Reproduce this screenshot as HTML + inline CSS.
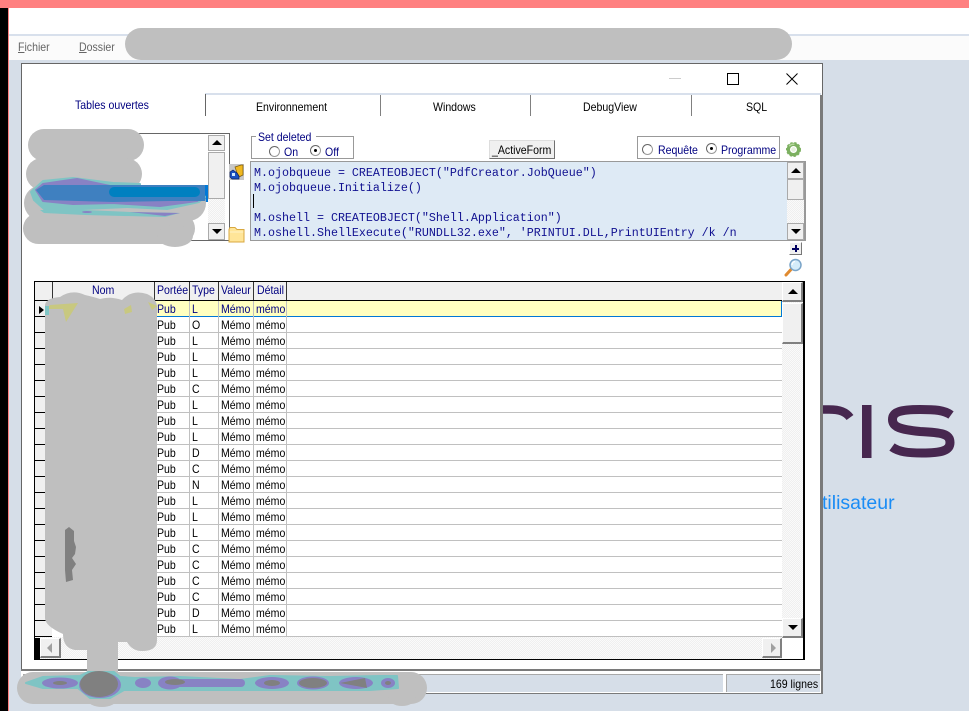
<!DOCTYPE html>
<html><head><meta charset="utf-8">
<style>
html,body{margin:0;padding:0}
body{width:969px;height:711px;overflow:hidden;position:relative;background:#d6dee8;font-family:"Liberation Sans",sans-serif;font-size:12px;color:#000}
div,span,i,u{position:absolute;white-space:nowrap}
i{font-style:normal}
u.n{position:static}
.navy{color:#000080}
.t,.g i,.h{transform:translateY(1px) scaleX(.88);transform-origin:0 50%}
.btn{background:#f0f0f0;box-sizing:border-box;border:1px solid;border-color:#fff #808080 #808080 #fff}
.dither{background-color:#fafafa;background-image:linear-gradient(45deg,#efefef 25%,transparent 25%,transparent 75%,#efefef 75%),linear-gradient(45deg,#efefef 25%,transparent 25%,transparent 75%,#efefef 75%);background-size:2px 2px;background-position:0 0,1px 1px}
.ind{left:35px;width:17px;height:16px;box-sizing:border-box;background:#f0f0f0;border-bottom:1px solid #000}
.h{top:282px;height:14px;line-height:14px;color:#000080}
.vh{top:282px;width:1px;height:18px;background:#333}
.code{left:254px;font-family:"Liberation Mono",monospace;font-size:11.67px;line-height:15px;color:#101090}
.up{width:0;height:0;border-left:5px solid transparent;border-right:5px solid transparent;border-bottom:5px solid #000}
.dn{width:0;height:0;border-left:5px solid transparent;border-right:5px solid transparent;border-top:5px solid #000}
.radio{width:9px;height:9px;border-radius:50%;background:#fff;border:1px solid #999;border-top-color:#666;border-left-color:#666}
.dot{width:3px;height:3px;border-radius:50%;background:#000;left:3px;top:3px}
.g{left:155px;width:627px;height:16px;box-sizing:border-box;border-bottom:1px solid #c0c0c0}
.g i{top:0;line-height:14px}.g i:nth-child(1){left:2px}.g i:nth-child(2){left:37px}.g i:nth-child(3){left:66px}.g i:nth-child(4){left:101px}
.g b{position:absolute;top:0;width:1px;height:16px;background:#c0c0c0}.g b.x{left:34px}.g b.y{left:63px}.g b.z{left:98px}.g b.w{left:131px}
</style></head>
<body>
<!-- top chrome -->
<div style="left:0;top:0;width:969px;height:8px;background:#ff8080"></div>
<div style="left:0;top:8px;width:8px;height:703px;background:#000"></div>
<div style="left:8px;top:8px;width:1px;height:703px;background:#ff8080"></div>
<div style="left:9px;top:8px;width:960px;height:26px;background:#fff"></div>
<div style="left:9px;top:34px;width:960px;height:2px;background:#d8e0ec"></div>
<div style="left:9px;top:36px;width:960px;height:24px;background:#fbfbfb"></div>
<div class="t" style="left:18px;top:39px;color:#666;line-height:14px"><u class="n">F</u>ichier</div>
<div class="t" style="left:79px;top:39px;color:#666;line-height:14px"><u class="n">D</u>ossier</div>

<!-- background logo -->
<svg style="position:absolute;left:815px;top:395px" width="154" height="70" viewBox="815 395 154 70">
<path d="M822 409.500H829C840 409.500 846 412 850 417.500" fill="none" stroke="#47274f" stroke-width="8.500"/>
<rect x="862" y="405" width="9.500" height="53" fill="#47274f"/>
<path d="M951 415C944 410 935 409.500 920 409.500C900 409.500 892.500 412 892.500 419.500C892.500 427 900 429.500 920 431.500C942 432.500 950 434 950 442.500C950 450.500 942 453 922 453C908 453 899 452 892 447" fill="none" stroke="#47274f" stroke-width="9"/>
</svg>
<div style="left:822px;top:492px;font-size:19.500px;line-height:22px;color:#1a8cf5">tilisateur</div>

<!-- window -->
<div style="left:21px;top:63px;width:802px;height:608px;background:#fff;box-sizing:border-box;border:1px solid #666"></div>
<div style="left:820px;top:95px;width:3px;height:575px;background:#7a7a7a"></div>
<div style="left:21px;top:669px;width:802px;height:2px;background:#7a7a7a"></div>
<!-- title buttons -->
<div style="left:669px;top:78px;width:12px;height:1px;background:#ccc"></div>
<div style="left:727px;top:73px;width:12px;height:12px;box-sizing:border-box;border:1px solid #000"></div>
<svg style="position:absolute;left:785px;top:72px" width="14" height="14"><path d="M1.500 1.500L12.500 12.500M12.500 1.500L1.500 12.500" stroke="#000" stroke-width="1"/></svg>

<!-- tabs -->
<div style="left:205px;top:93px;width:616px;height:2px;background:#d8e0ec"></div>
<div style="left:205px;top:94px;width:1px;height:22px;background:#666"></div>
<div style="left:380px;top:95px;width:1px;height:21px;background:#808080"></div>
<div style="left:530px;top:95px;width:1px;height:21px;background:#808080"></div>
<div style="left:691px;top:95px;width:1px;height:21px;background:#808080"></div>
<div class="t navy" style="left:75px;top:97px;line-height:14px">Tables ouvertes</div>
<div class="t" style="left:256px;top:99px;line-height:14px">Environnement</div>
<div class="t" style="left:433px;top:99px;line-height:14px">Windows</div>
<div class="t" style="left:583px;top:99px;line-height:14px">DebugView</div>
<div class="t" style="left:746px;top:99px;line-height:14px">SQL</div>

<!-- list box -->
<div style="left:120px;top:133px;width:110px;height:108px;box-sizing:border-box;border:1px solid #666;background:#fff"></div>
<div style="left:34px;top:185px;width:174px;height:17px;background:#0078d7"></div>
<div class="dither" style="left:208px;top:152px;width:17px;height:87px"></div>
<div class="btn" style="left:208px;top:135px;width:17px;height:16px;border:1px solid #aaa"><div class="up" style="left:3px;top:4px"></div></div>
<div class="btn" style="left:208px;top:152px;width:17px;height:47px;border:1px solid #aaa"></div>
<div class="btn" style="left:208px;top:223px;width:17px;height:17px;border:1px solid #aaa"><div class="dn" style="left:3px;top:5px"></div></div>

<!-- icons -->
<svg style="position:absolute;left:229px;top:164px" width="15" height="16" viewBox="0 0 15 16">
<rect width="15" height="16" fill="#c8c8c8"/>
<path d="M6 3L12 1H14V11L10 13L8 9Z" fill="#f0b820" stroke="#7a5a10" stroke-width=".7"/>
<path d="M1 8L4 6L8 9L10 12V15H3L1 13Z" fill="#1a50c0" stroke="#0a2060" stroke-width=".7"/>
<rect x="3" y="9" width="3" height="3" fill="#cfe8ff"/>
</svg>
<svg style="position:absolute;left:228px;top:226px" width="17" height="17" viewBox="0 0 17 17">
<path d="M1 16V3.500L2 1.500H7L9 3.500H16V16Z" fill="#ffe598" stroke="#d8a840" stroke-width="1"/>
<path d="M1.500 6H15.500" stroke="#fff2c8" stroke-width="1"/>
</svg>

<!-- set deleted -->
<div style="left:251px;top:136px;width:103px;height:23px;box-sizing:border-box;border:1px solid #999"></div>
<div style="left:256px;top:131px;width:60px;height:12px;background:#fff"></div>
<div class="t navy" style="left:258px;top:129px;line-height:14px">Set deleted</div>
<div class="radio" style="left:269px;top:146px"></div>
<div class="t navy" style="left:284px;top:144px;line-height:14px">On</div>
<div class="radio" style="left:310px;top:145px"><div class="dot"></div></div>
<div class="t navy" style="left:325px;top:144px;line-height:14px">Off</div>

<!-- active form -->
<div style="left:489px;top:140px;width:66px;height:19px;box-sizing:border-box;background:#f0f0f0;border:1px solid;border-color:#ddd #707070 #707070 #ddd"></div>
<div class="t" style="left:492px;top:142px;line-height:15px">_ActiveForm</div>

<!-- requete group -->
<div style="left:637px;top:136px;width:143px;height:23px;box-sizing:border-box;border:1px solid #999"></div>
<div class="radio" style="left:642px;top:144px"></div>
<div class="t navy" style="left:658px;top:142px;line-height:14px">Requête</div>
<div class="radio" style="left:706px;top:143px"><div class="dot"></div></div>
<div class="t navy" style="left:721px;top:142px;line-height:14px">Programme</div>
<svg style="position:absolute;left:786px;top:142px" width="15" height="15" viewBox="0 0 16 16">
<circle cx="8" cy="8" r="5.500" fill="none" stroke="#7cb060" stroke-width="3.500"/>
<circle cx="8" cy="8" r="7" fill="none" stroke="#7cb060" stroke-width="2" stroke-dasharray="2.400 1.800"/>
<circle cx="8" cy="8" r="2.500" fill="#e6f2dc"/>
<path d="M3.500 4.500A5.500 5.500 0 0 1 9 2.500" stroke="#b8d8a0" stroke-width="1.500" fill="none"/>
</svg>

<!-- code box -->
<div style="left:250px;top:161px;width:556px;height:80px;box-sizing:border-box;border:1px solid #999;border-right:2px solid #999;background:#deeaf5"></div>
<div class="code" style="top:166px">M.ojobqueue = CREATEOBJECT("PdfCreator.JobQueue")</div>
<div class="code" style="top:181px">M.ojobqueue.Initialize()</div>
<div style="left:253px;top:194px;width:1px;height:14px;background:#000"></div>
<div class="code" style="top:211px">M.oshell = CREATEOBJECT("Shell.Application")</div>
<div class="code" style="top:226px">M.oshell.ShellExecute("RUNDLL32.exe", 'PRINTUI.DLL,PrintUIEntry /k /n</div>
<div class="dither" style="left:787px;top:162px;width:17px;height:78px"></div>
<div class="btn" style="left:787px;top:162px;width:17px;height:17px;border:1px solid #aaa"><div class="up" style="left:3px;top:5px"></div></div>
<div class="btn" style="left:787px;top:179px;width:17px;height:21px;border:1px solid #aaa"></div>
<div class="btn" style="left:787px;top:223px;width:17px;height:17px;border:1px solid #aaa"><div class="dn" style="left:3px;top:5px"></div></div>

<!-- plus / magnifier -->
<div class="btn" style="left:789px;top:242px;width:13px;height:13px;border-color:#fff #777 #777 #fff"></div>
<div style="left:792px;top:248px;width:7px;height:2px;background:#000060"></div>
<div style="left:795px;top:245px;width:2px;height:7px;background:#000060"></div>
<svg style="position:absolute;left:784px;top:258px" width="19" height="19" viewBox="0 0 19 19">
<path d="M2 17L7 11.500" stroke="#e08a30" stroke-width="3" stroke-linecap="round"/>
<circle cx="11.500" cy="7" r="5.500" fill="#d4ecfa" stroke="#7aa4c8" stroke-width="1.500"/>
<path d="M8 7A3.500 3.500 0 0 1 11 3.500" stroke="#fff" stroke-width="1.300" fill="none"/>
</svg>

<!-- grid -->
<div style="left:34px;top:281px;width:771px;height:379px;box-sizing:border-box;border:1px solid #000;border-width:1px 2px 2px 1px;background:#fff"></div>
<div style="left:35px;top:282px;width:747px;height:18px;background:#f0f0f0"></div>
<div style="left:35px;top:300px;width:747px;height:1px;background:#000"></div>
<div class="vh" style="left:52px"></div><div class="vh" style="left:154px"></div><div class="vh" style="left:189px"></div><div class="vh" style="left:218px"></div><div class="vh" style="left:253px"></div><div class="vh" style="left:286px"></div>
<div class="h" style="left:92px">Nom</div><div class="h" style="left:157px">Portée</div><div class="h" style="left:192px">Type</div><div class="h" style="left:221px">Valeur</div><div class="h" style="left:257px">Détail</div>

<div style="left:155px;top:301px;width:627px;height:16px;box-sizing:border-box;background:#ffffc0;border-right:1px solid #0078d7;border-bottom:1px solid #0078d7"></div>
<div class="ind" style="top:301px"></div><div class="ind" style="top:317px"></div><div class="ind" style="top:333px"></div><div class="ind" style="top:349px"></div><div class="ind" style="top:365px"></div><div class="ind" style="top:381px"></div><div class="ind" style="top:397px"></div><div class="ind" style="top:413px"></div><div class="ind" style="top:429px"></div><div class="ind" style="top:445px"></div><div class="ind" style="top:461px"></div><div class="ind" style="top:477px"></div><div class="ind" style="top:493px"></div><div class="ind" style="top:509px"></div><div class="ind" style="top:525px"></div><div class="ind" style="top:541px"></div><div class="ind" style="top:557px"></div><div class="ind" style="top:573px"></div><div class="ind" style="top:589px"></div><div class="ind" style="top:605px"></div><div class="ind" style="top:621px"></div>
<div style="left:39px;top:306px;width:0;height:0;border-top:4px solid transparent;border-bottom:4px solid transparent;border-left:5px solid #000"></div>

<div class="g navy" style="top:301px;border-bottom-color:#0078d7"><i>Pub</i><i>L</i><i>Mémo</i><i>mémo</i><b class="x"></b><b class="y"></b><b class="z"></b><b class="w"></b></div>
<div class="g" style="top:317px"><i>Pub</i><i>O</i><i>Mémo</i><i>mémo</i><b class="x"></b><b class="y"></b><b class="z"></b><b class="w"></b></div>
<div class="g" style="top:333px"><i>Pub</i><i>L</i><i>Mémo</i><i>mémo</i><b class="x"></b><b class="y"></b><b class="z"></b><b class="w"></b></div>
<div class="g" style="top:349px"><i>Pub</i><i>L</i><i>Mémo</i><i>mémo</i><b class="x"></b><b class="y"></b><b class="z"></b><b class="w"></b></div>
<div class="g" style="top:365px"><i>Pub</i><i>L</i><i>Mémo</i><i>mémo</i><b class="x"></b><b class="y"></b><b class="z"></b><b class="w"></b></div>
<div class="g" style="top:381px"><i>Pub</i><i>C</i><i>Mémo</i><i>mémo</i><b class="x"></b><b class="y"></b><b class="z"></b><b class="w"></b></div>
<div class="g" style="top:397px"><i>Pub</i><i>L</i><i>Mémo</i><i>mémo</i><b class="x"></b><b class="y"></b><b class="z"></b><b class="w"></b></div>
<div class="g" style="top:413px"><i>Pub</i><i>L</i><i>Mémo</i><i>mémo</i><b class="x"></b><b class="y"></b><b class="z"></b><b class="w"></b></div>
<div class="g" style="top:429px"><i>Pub</i><i>L</i><i>Mémo</i><i>mémo</i><b class="x"></b><b class="y"></b><b class="z"></b><b class="w"></b></div>
<div class="g" style="top:445px"><i>Pub</i><i>D</i><i>Mémo</i><i>mémo</i><b class="x"></b><b class="y"></b><b class="z"></b><b class="w"></b></div>
<div class="g" style="top:461px"><i>Pub</i><i>C</i><i>Mémo</i><i>mémo</i><b class="x"></b><b class="y"></b><b class="z"></b><b class="w"></b></div>
<div class="g" style="top:477px"><i>Pub</i><i>N</i><i>Mémo</i><i>mémo</i><b class="x"></b><b class="y"></b><b class="z"></b><b class="w"></b></div>
<div class="g" style="top:493px"><i>Pub</i><i>L</i><i>Mémo</i><i>mémo</i><b class="x"></b><b class="y"></b><b class="z"></b><b class="w"></b></div>
<div class="g" style="top:509px"><i>Pub</i><i>L</i><i>Mémo</i><i>mémo</i><b class="x"></b><b class="y"></b><b class="z"></b><b class="w"></b></div>
<div class="g" style="top:525px"><i>Pub</i><i>L</i><i>Mémo</i><i>mémo</i><b class="x"></b><b class="y"></b><b class="z"></b><b class="w"></b></div>
<div class="g" style="top:541px"><i>Pub</i><i>C</i><i>Mémo</i><i>mémo</i><b class="x"></b><b class="y"></b><b class="z"></b><b class="w"></b></div>
<div class="g" style="top:557px"><i>Pub</i><i>C</i><i>Mémo</i><i>mémo</i><b class="x"></b><b class="y"></b><b class="z"></b><b class="w"></b></div>
<div class="g" style="top:573px"><i>Pub</i><i>C</i><i>Mémo</i><i>mémo</i><b class="x"></b><b class="y"></b><b class="z"></b><b class="w"></b></div>
<div class="g" style="top:589px"><i>Pub</i><i>C</i><i>Mémo</i><i>mémo</i><b class="x"></b><b class="y"></b><b class="z"></b><b class="w"></b></div>
<div class="g" style="top:605px"><i>Pub</i><i>D</i><i>Mémo</i><i>mémo</i><b class="x"></b><b class="y"></b><b class="z"></b><b class="w"></b></div>
<div class="g" style="top:621px"><i>Pub</i><i>L</i><i>Mémo</i><i>mémo</i><b class="x"></b><b class="y"></b><b class="z"></b><b class="w"></b></div>

<!-- grid scrollbars -->
<div class="dither" style="left:782px;top:282px;width:21px;height:355px"></div>
<div class="btn" style="left:782px;top:282px;width:21px;height:20px;border-width:1px 2px 2px 1px"><div class="up" style="left:5px;top:6px"></div></div>
<div class="btn" style="left:782px;top:303px;width:21px;height:41px;border-width:1px 2px 2px 1px"></div>
<div class="btn" style="left:782px;top:618px;width:21px;height:20px;border-width:1px 2px 2px 1px"><div class="dn" style="left:5px;top:6px"></div></div>
<div class="dither" style="left:35px;top:637px;width:747px;height:22px"></div>
<div style="left:35px;top:638px;width:5px;height:21px;background:#000"></div>
<div class="btn" style="left:40px;top:638px;width:21px;height:20px;border-width:1px 2px 2px 1px"><div style="left:6px;top:4px;width:0;height:0;border-top:5px solid transparent;border-bottom:5px solid transparent;border-right:5px solid #a0a0a0"></div></div>
<div class="btn" style="left:762px;top:638px;width:20px;height:20px;border-width:1px 2px 2px 1px"><div style="left:8px;top:4px;width:0;height:0;border-top:5px solid transparent;border-bottom:5px solid transparent;border-left:5px solid #a0a0a0"></div></div>
<div style="left:782px;top:638px;width:21px;height:21px;background:#fff"></div>

<!-- status bar -->
<div style="left:21px;top:671px;width:802px;height:23px;background:#fff;box-sizing:border-box;border-bottom:1px solid #7a7a7a;border-right:2px solid #7a7a7a"></div>
<div style="left:23px;top:674px;width:700px;height:18px;box-sizing:border-box;background:#d6dee8;border-top:1px solid #a8a8a8;border-left:1px solid #a8a8a8"></div>
<div style="left:726px;top:674px;width:94px;height:18px;box-sizing:border-box;background:#d6dee8;border-top:1px solid #a8a8a8;border-left:1px solid #a8a8a8"></div>
<div class="t" style="left:770px;top:675px;line-height:17px">169 lignes</div>

<!-- redaction blobs -->
<svg style="position:absolute;left:0;top:0" width="969" height="711" viewBox="0 0 969 711">
<rect x="125" y="28" width="667" height="32" rx="16" fill="#bfbfbf"/>
<!-- list blob -->
<g fill="#bfbfbf">
<rect x="28" y="129" width="116" height="32" rx="16"/>
<rect x="26" y="158" width="116" height="32" rx="16"/>
<rect x="24" y="185" width="182" height="36" rx="18"/>
<rect x="23" y="213" width="172" height="31" rx="15.500"/>
<ellipse cx="175" cy="236" rx="18" ry="11"/>
</g>
<path d="M31 192L43 181L73 178L113 183L140 184V188L199 188L205 197L199 202L167 209L127 207L83 209L44 209L34 200Z" fill="#7fc4c4" stroke="#7fc4c4" stroke-width="2" stroke-linejoin="round"/>
<path d="M36 190L43 184L77 179L110 186L200 189L203 197L197 201L160 206L113 203L73 204L43 201Z" fill="#8882c4" stroke="#8882c4" stroke-width="2" stroke-linejoin="round"/>
<path d="M36 190L44 185H205V201H170L113 202L44 200Z" fill="#3f80c0"/>
<rect x="109" y="187" width="91" height="10" rx="5" fill="#0080c0"/>
<path d="M40 210L85 210L130 212L180 213L165 217L85 215L44 213Z" fill="#7fc4c4"/>
<path d="M130 212L180 213L165 216Z" fill="#8882c4"/>
<ellipse cx="87" cy="212" rx="5" ry="1" fill="#8882c4"/>
<!-- grid blob -->
<path d="M45 305Q46 298 60 297Q72 289 85 295Q94 297 100 299Q110 296 122 300Q132 289 147 294Q156 298 157 306V640Q157 651 142 651Q132 651 127 642L118 642V675H87V650H75Q63 648 63 634Q45 626 45 618Z" fill="#bfbfbf"/>
<path d="M50 305L78 303L66 322L63 309L47 309Z" fill="#c8c880"/>
<path d="M124 309L131 305L132 312L125 314ZM148 302L157 306L152 310Z" fill="#c8c880"/>
<rect x="45" y="306" width="4" height="9" fill="#7fc4c4"/>
<path d="M65 530L69 527L74 531V541L76 547L75 554L72 558L76 564L72 570L73 580L66 582L65 570Z" fill="#808080"/>
<!-- bottom blob -->
<rect x="17" y="672" width="410" height="32" rx="16" fill="#bfbfbf"/>
<ellipse cx="402" cy="697" rx="14" ry="9" fill="#bfbfbf"/>
<ellipse cx="102" cy="699" rx="15" ry="8" fill="#bfbfbf"/>
<path d="M26 683L43 677L80 676L88 672H114L120 677L135 678L180 677L240 680L270 676L330 677L380 676L397 676L398 688L370 690L320 690L280 690L240 690L180 690L124 690L110 698H90L78 688L43 688Z" fill="#7fc4c4" stroke="#7fc4c4" stroke-width="2" stroke-linejoin="round"/>
<g fill="#8882c4">
<ellipse cx="60" cy="683" rx="18" ry="5.500"/>
<ellipse cx="100" cy="685" rx="21" ry="13"/>
<ellipse cx="143" cy="683" rx="8" ry="5"/>
<ellipse cx="170" cy="683" rx="12" ry="6.500"/>
<rect x="165" y="679" width="80" height="8" rx="4"/>
<ellipse cx="272" cy="683" rx="17" ry="6"/>
<ellipse cx="313" cy="683" rx="16" ry="6.500"/>
<ellipse cx="356" cy="683" rx="17" ry="6"/>
<ellipse cx="388" cy="683" rx="7" ry="5"/>
</g>
<g fill="#808080">
<ellipse cx="60" cy="683" rx="7" ry="2"/>
<ellipse cx="99" cy="684" rx="19" ry="13"/>
<ellipse cx="175" cy="682" rx="10" ry="3"/>
<ellipse cx="272" cy="683" rx="8" ry="3"/>
<ellipse cx="313" cy="683" rx="14" ry="5"/>
<path d="M340 683L365 678L367 688Z"/>
<ellipse cx="388" cy="683" rx="3" ry="2"/>
</g>
</svg>
</body></html>
